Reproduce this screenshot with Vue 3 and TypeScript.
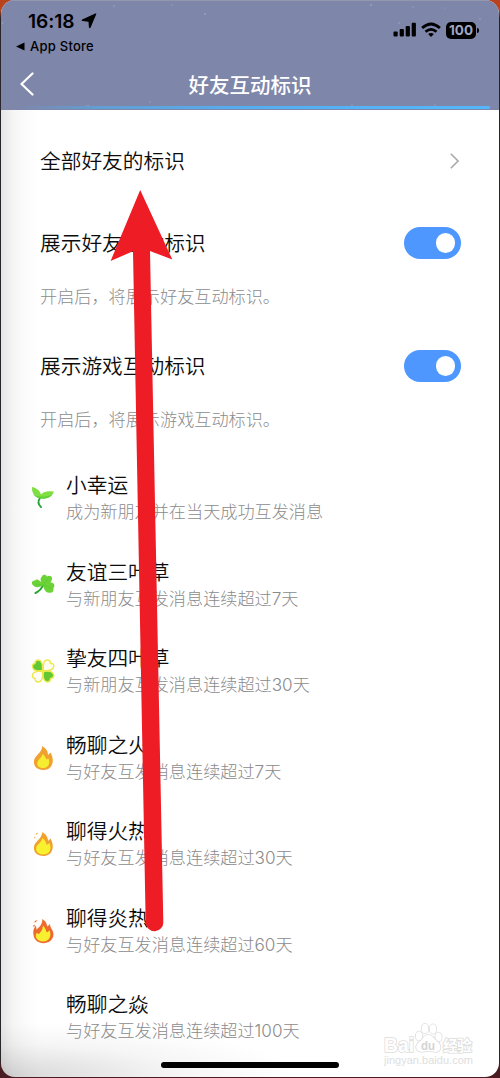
<script setup lang="ts">
type Badge = { icon: string; name: string; desc: string }

const switches = [
  { label: '展示好友互动标识', note: '开启后，将展示好友互动标识。' },
  { label: '展示游戏互动标识', note: '开启后，将展示游戏互动标识。' },
]

const badges: Badge[] = [
  { icon: 'sprout', name: '小幸运', desc: '成为新朋友并在当天成功互发消息' },
  { icon: 'clover3', name: '友谊三叶草', desc: '与新朋友互发消息连续超过7天' },
  { icon: 'clover4', name: '挚友四叶草', desc: '与新朋友互发消息连续超过30天' },
  { icon: 'fire1', name: '畅聊之火', desc: '与好友互发消息连续超过7天' },
  { icon: 'fire2', name: '聊得火热', desc: '与好友互发消息连续超过30天' },
  { icon: 'fire3', name: '聊得炎热', desc: '与好友互发消息连续超过60天' },
  { icon: '', name: '畅聊之焱', desc: '与好友互发消息连续超过100天' },
]
</script>

<template>
  <div class="device">
    <div class="screen">
      <header class="header">
        <svg class="stars" width="498" height="110" viewBox="1 0 498 110" fill="#9da5c8">
          <circle cx="114" cy="5" r=".8" /><circle cx="172" cy="4" r=".7" /><circle cx="205" cy="13" r=".9" />
          <circle cx="371" cy="4" r=".9" /><circle cx="413" cy="6" r=".7" /><circle cx="399" cy="22" r=".8" />
          <circle cx="480" cy="18" r=".8" /><circle cx="445" cy="7" r=".6" /><circle cx="88" cy="105" r="1" />
          <circle cx="85" cy="105" r=".6" /><circle cx="150" cy="101" r=".7" /><circle cx="352" cy="104" r=".7" />
          <circle cx="435" cy="104" r=".7" /><circle cx="2.5" cy="22" r=".8" /><circle cx="54" cy="11" r=".5" />
        </svg>
        <div class="status">
          <div class="clock">
            <span class="time">16:18</span>
            <svg width="16" height="16" viewBox="0 0 16 16"><path d="M15.3 1 9.6 14.600Q8.700 16 7.900 14.300L7.500 8.700 1.500 8.100Q-.2 7.400 1.200 6.500L14.300.5Q15.500.1 15.300 1Z" /></svg>
          </div>
          <div class="system">
            <svg width="24" height="16" viewBox="0 0 24 16">
              <rect x=".5" y="9.5" width="4.2" height="5" rx="1" /><rect x="6.7" y="7" width="4.2" height="7.5" rx="1" />
              <rect x="12.7" y="4" width="4.2" height="10.5" rx="1" /><rect x="18.7" y=".8" width="4.2" height="13.7" rx="1" />
            </svg>
            <svg class="wifi" width="20" height="16" viewBox="0 0 20 16" fill="none" stroke="#000" stroke-width="2.7">
              <path d="M1.1 6.1Q10-2.1 18.9 6.1" /><path d="M4.5 9.8Q10 4.9 15.5 9.8" />
              <path d="M7.1 12.1Q10 9.7 12.9 12.1L10 15Z" fill="#000" stroke="none" />
            </svg>
            <span class="battery">100</span>
            <i class="pole"></i>
          </div>
        </div>
        <div class="return">
          <svg width="9" height="9" viewBox="0 0 9 9"><path d="M0 4.5 8.5.5V8.5Z" /></svg>
          <span>App Store</span>
        </div>
        <div class="nav">
          <svg class="back" width="14" height="24" viewBox="0 0 14 24" fill="none" stroke="#fff" stroke-width="2.2" stroke-linecap="round"><path d="M12.500 1.500 1.500 12 12.500 22.500" /></svg>
          <h1>好友互动标识</h1>
        </div>
        <div class="progress"></div>
      </header>

      <main>
        <div class="row first">
          <span>全部好友的标识</span>
          <svg width="9" height="16" viewBox="0 0 9 16" fill="none" stroke="#aaaaac" stroke-width="1.6"><path d="M.8.8 8 8 .8 15.2" /></svg>
        </div>
        <section v-for="item in switches" :key="item.label" class="setting">
          <div class="row">
            <span>{{ item.label }}</span>
            <span class="switch"><i></i></span>
          </div>
          <p class="note">{{ item.note }}</p>
        </section>
        <ul class="badges">
          <li v-for="badge in badges" :key="badge.name">
            <div class="icon">
              <svg v-if="badge.icon === 'sprout'" width="24" height="24" viewBox="0 0 24 24">
                <path d="M9 12Q5.5 17 10 21" fill="none" stroke="#27a43c" stroke-width="1.9" stroke-linecap="round" />
                <path d="M1 1C6 2 9 5 10 8.500C13 5 18 5 23 5.800C21 11 15 14 9.300 12.300C4 11.500.5 7 1 1Z" fill="#7fdf43" />
                <path d="M2 8Q5 12 9.300 12.300C14 13.500 19 11.500 21.500 8.500Q16 11.200 10 10.500Q5 11 2 8Z" fill="#5fd038" />
              </svg>
              <svg v-else-if="badge.icon === 'clover3'" width="24" height="24" viewBox="0 0 24 24">
                <path d="M12 12Q10 17.500 4.500 20" fill="none" stroke="#2aa538" stroke-width="2" stroke-linecap="round" />
                <path d="M12 12.500C9 9 9 5 11 3.500C11.500 1 15 1 16 3.500C19 1.500 22.500 4 20.500 7.500L19.500 9.500C23 9 24.500 13 22.500 15C23 18 21 20.500 18.500 19.500C15.500 20.500 13 17 12 12.500C8 14.500 4 15 2.500 12.500C-.5 11 1 7 4 7.500C6 5 10 8 12 12.500Z" fill="#6bd336" />
                <path d="M5 11.500Q9 11.500 12 12.500L17 5.500M12 12.500Q17 12.500 20 15.500" fill="none" stroke="#57c738" stroke-width=".7" />
              </svg>
              <svg v-else-if="badge.icon === 'clover4'" width="24" height="24" viewBox="0 0 24 24" stroke="#ece84e" stroke-width="1.4">
                <path d="M11.5 11.5C6 12.7 2 11.5 1.5 8Q1 5 4 4.5Q4 1 7.5 1C11 1.5 12 6 11.5 11.5Z" fill="#61c832" />
                <path d="M12.500 11.500C11.500 5 13 1 16.500 1Q19.500 1 19.500 4.500Q23 4 22.800 7.500C22 11 18 12 12.500 11.500Z" fill="#fffef4" />
                <path d="M12.500 12.500C18 11.500 22 13 22.800 16Q23 19 19.500 19.500Q19.500 23 16 23C12.500 22 11.500 18 12.500 12.500Z" fill="#61c832" />
                <path d="M11.500 12.500C12 18 11 22.500 7.500 23Q4 23 4 19.500Q1 19 1.500 16C2 13 6 12 11.500 12.500Z" fill="#fffef4" />
              </svg>
              <svg v-else-if="badge.icon" width="24" height="26" viewBox="0 0 24 26">
                <g :fill="badge.icon === 'fire3' ? '#ee6b2e' : '#f0a12f'">
                  <path v-if="badge.icon === 'fire1'" d="M11.300 1C16 4 17 7 17 10L19.500 7.500C24 15 22 25 12.300 25C2.500 25 1 16 5 11.500C7.500 8.500 11 6 11.300 1Z" />
                  <path v-else-if="badge.icon === 'fire2'" d="M11.300 1C16 4 17 7 17 10L19.500 7.500C24 15 22 25 12.300 25C2.500 25 1 16 5 11.500C7.500 8.500 11 6 11.300 1ZM4.500 4Q5 1.500 7 1.500Q6.500 3.500 4.500 4ZM3 6.500L4.500 5.500 4 7.500Z" />
                  <path v-else d="M11.300 1C15.500 3.500 15.500 6 16.500 8.500L19 6C19 10 22.500 12 22.500 16.500C22 28 3 28 2.500 16.500C1.500 13 3.500 9 5 7.500L5.500 11.500C9 9 11.500 6 11.300 1ZM3 4.500Q4 2 6.500 2.200Q5 4.500 3 4.500ZM2 7.500L4 6.500 3 9.500Z" />
                </g>
                <path v-if="badge.icon === 'fire1'" d="M11.500 9C14.500 11 14.500 13 15.500 14.500L17.500 13.500C19.500 18.500 17 23 12.300 23C6.500 23 5 18.500 7.300 15.500C9 13 11 12 11.500 9Z" fill="#f5ee30" />
                <path v-else-if="badge.icon === 'fire2'" d="M11.300 7C14.500 9 15 12 15.700 14L18.300 12C21.300 18 18.500 23.500 12.300 23.500C5.500 23.500 3.300 18 6.500 14C8.500 12 11 10.500 11.300 7Z" fill="#f7f12f" />
                <path v-else d="M11.800 7.500C14.500 10 15 12.500 15.800 14.500L18.500 12.500C21 18 18 23.500 12.300 23.500C6 23.500 3.500 19 5.500 15L8 16C10 13.500 12 11.500 11.800 7.500Z" fill="#f7ef2f" />
              </svg>
            </div>
            <div class="copy">
              <div class="name">{{ badge.name }}</div>
              <div class="desc">{{ badge.desc }}</div>
            </div>
          </li>
        </ul>
      </main>
      <div class="shade"></div>
      <svg class="watermark" width="94" height="46" viewBox="0 0 94 46" fill="#fff" stroke="#dcdcdc" stroke-width="1.6" paint-order="stroke">
        <text x="0" y="28.500" font-size="20.500" font-weight="700" textLength="30" lengthAdjust="spacingAndGlyphs">Bai</text>
        <ellipse cx="35" cy="13" rx="3.200" ry="4.500" /><ellipse cx="41" cy="5.500" rx="3.300" ry="4.700" />
        <ellipse cx="49" cy="6" rx="3.300" ry="4.700" /><ellipse cx="54.500" cy="14" rx="3.200" ry="4.500" />
        <path d="M44 12C50 12 50 17 55 20C59 27 54 30 49 28.500Q44 27.500 40 28.500C33 30 30 25 34 20C39 17 39 12 44 12Z" />
        <text x="37" y="27" font-size="13" font-weight="700" textLength="14" lengthAdjust="spacingAndGlyphs" fill="#d4d4d4" stroke="none">du</text>
        <text class="cn" x="59" y="27.500" font-size="15" font-weight="700" textLength="29">经验</text>
        <text x="0" y="41" font-size="10.500" textLength="89" lengthAdjust="spacingAndGlyphs" fill="#dedede" stroke="none">jingyan.baidu.com</text>
      </svg>
      <div class="home"></div>
    </div>
    <svg class="arrow" width="500" height="1078" viewBox="0 0 500 1078">
      <path d="M140.200 190 172.300 259.500 150 251 163.300 922A8.800 8.800 0 0 1 145.700 923L133 251.200 110.600 261Z" fill="#ee1c25" />
    </svg>
  </div>
</template>

<style>
body { margin: 0; }
</style>

<style scoped>
* { box-sizing: border-box; }
.device { position: relative; width: 500px; height: 1078px; padding: 0 1px; background: linear-gradient(#b9421e 0, #b9421e 10px, #29262b 18px, #29262b 1060px, #4b1b22 1068px); overflow: hidden; font-family: Inter, "Noto Sans CJK SC", sans-serif; color: #0c0c0c; }
.screen { position: relative; width: 498px; height: 1077px; border-radius: 14px; overflow: hidden; background: #fff; }
.header { position: relative; height: 110px; background: #7e86aa; border-top: 1px solid #9298b0; }
.stars { position: absolute; left: 0; top: 0; }
.status { position: relative; display: flex; justify-content: space-between; height: 36px; padding: 8px 20px 0 27px; }
.clock { display: flex; align-items: center; height: 24px; gap: 5px; }
.time { font-size: 19.200px; font-weight: 600; line-height: 24px; color: #000; width: 48px; letter-spacing: -.1px; white-space: nowrap; }
.system { display: flex; height: 16px; margin-top: 13px; align-items: center; }
.wifi { margin-left: 4px; }
.battery { display: block; width: 30px; height: 17px; margin-left: 5px; border-radius: 5px; background: #000; color: #a0a7c6; font-size: 13.500px; font-weight: 700; line-height: 17px; text-align: center; }
.pole { width: 2px; height: 5px; margin-left: 1px; border-radius: 0 2px 2px 0; background: #000; }
.return { position: relative; display: flex; align-items: center; gap: 5px; height: 18px; padding-left: 15px; font-size: 13px; font-weight: 500; letter-spacing: .25px; color: #000; }
.nav { position: relative; display: flex; height: 51px; padding: 17px 0 0 19px; }
.nav h1 { margin: 0 0 0 154.500px; font-size: 20.500px; font-weight: 500; line-height: 28px; color: #fff; }
.progress { position: relative; width: 489px; height: 3px; border-radius: 2px; background: linear-gradient(90deg, #7e86aa 3%, #629fd3 20%, #55aef0 50%, #55b7fb); }
main { display: flex; flex-direction: column; }
.row { display: flex; justify-content: space-between; align-items: center; height: 32px; padding: 0 38px 0 39px; font-size: 20.700px; line-height: 30px; font-weight: 350; }
.row > span:first-child { padding-top: 2px; }
.first { height: 34px; margin-top: 34px; padding-right: 40px; }
.setting { margin-top: 49px; height: 74px; }
.switch { display: flex; justify-content: flex-end; align-items: center; width: 57px; height: 31.500px; padding-right: 6px; border-radius: 16px; background: #4d97ff; }
.switch i { width: 19.500px; height: 19.500px; border-radius: 50%; background: #fff; }
.note { margin: 26px 0 0 39px; font-size: 17.150px; line-height: 24px; font-weight: 300; color: #8b8b8d; }
.badges { list-style: none; margin: 48px 0 0; padding: 0 0 0 30px; }
.badges li { display: flex; height: 86.500px; }
.icon { display: flex; align-items: center; justify-content: center; width: 24px; height: 24px; margin-top: 14px; }
.copy { padding-left: 11px; }
.name { font-size: 20.700px; line-height: 28px; font-weight: 350; }
.desc { font-size: 17.150px; line-height: 24px; font-weight: 300; color: #8b8b8d; }
.shade { position: absolute; inset: 110px 0 0; pointer-events: none; background: linear-gradient(90deg, rgba(0,0,0,.1), rgba(0,0,0,.04) 12px, rgba(0,0,0,.014) 25px, transparent 38px), radial-gradient(ellipse 300px 55px at 0 100%, rgba(0,0,0,.16), rgba(0,0,0,.04) 60%, transparent); }
.watermark { position: absolute; right: 21px; top: 1023px; overflow: visible; font-family: "Liberation Sans", sans-serif; }
.cn { font-family: "Noto Sans CJK SC", sans-serif; }
.home { position: absolute; left: 160px; top: 1062px; width: 178px; height: 6px; border-radius: 3px; background: #000; }
.arrow { position: absolute; left: 0; top: 0; }
</style>
